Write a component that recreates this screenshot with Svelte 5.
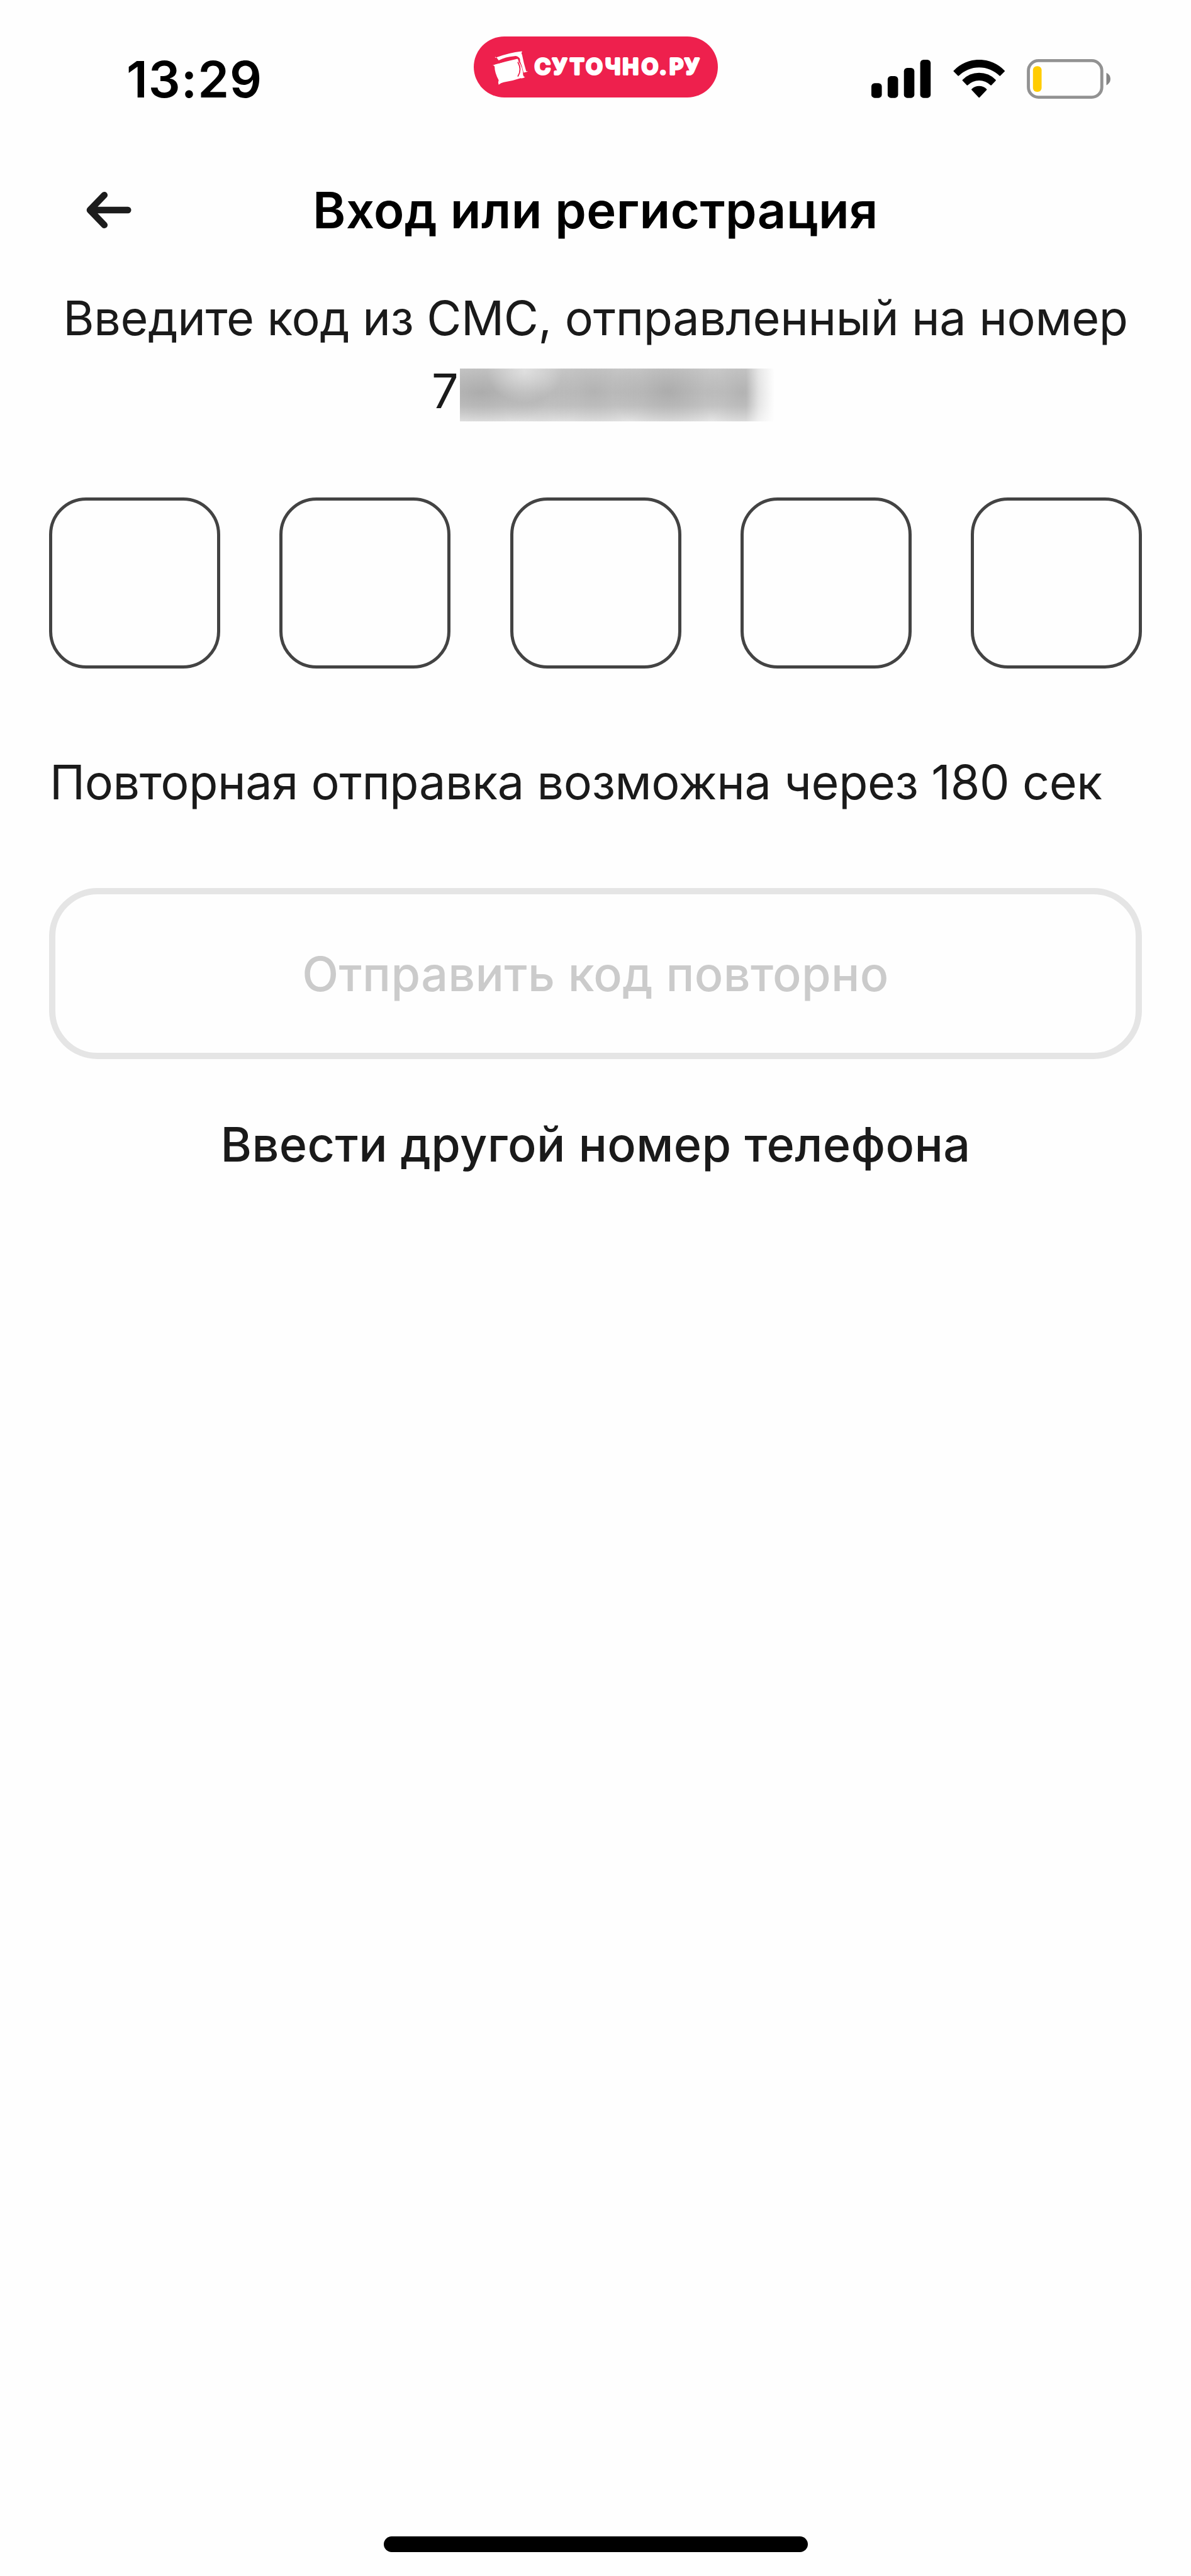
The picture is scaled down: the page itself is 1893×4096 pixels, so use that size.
<script lang="ts">
	const codeLength = 5;
	const secondsLeft = 180;

	let code: string[] = Array(codeLength).fill('');
	$: canResend = secondsLeft <= 0;
</script>

<div class="screen">
	<div class="status-bar">
		<span class="time">13:29</span>

		<svg class="brand" viewBox="0 0 480 120" role="img" aria-label="Суточно.ру">
			<rect width="480" height="120" rx="60" fill="#ee204d" />
			<g fill="#fff">
				<path d="M42 42q26-10 53-13q-2 4 0 7q3 16 8 32q2 1 4 1l-9 2q-3-14-8-25q-2-10-12-7q-15 1-29 8q-2-5-7-7z" />
				<path d="M36 56q3 1 6-1q22-6 44-11q2 2 2 5q9 13 9 27q1 3 4 4q-5 3-9 2q-17 6-33 8q-6 1-10 5q-2-4 0-9q-8-15-8-27q-1-2-5-3z" />
			</g>
			<path d="M87 51q8 14 0 27M49 52q19-7 37-10q4 0 4 5" fill="none" stroke="#ee204d" stroke-width="2.2" stroke-linecap="round" />
			<text
				class="brand-text"
				y="74.6"
				x="135.5 169 203 237 273.5 308.5 346.5 372 398.5 429"
			>СУТОЧНО.РУ</text>
		</svg>

		<div class="indicators">
			<svg class="signal" viewBox="0 0 117 75">
				<rect x="0" y="46" width="20.5" height="29" rx="6.5" />
				<rect x="32" y="32" width="20.5" height="43" rx="6.5" />
				<rect x="64" y="16" width="20.5" height="59" rx="6.5" />
				<rect x="96" y="0" width="20.5" height="75" rx="6.5" />
			</svg>
			<svg class="wifi" viewBox="0 0 102 75">
				<path d="M.8 21.5a69 69 0 0 1 100.4 0q.6.8 0 1.5l-8.6 8.6q-.8.7-1.6 0a57 57 0 0 0-80 0q-.8.7-1.6 0l-8.6-8.6q-.6-.7 0-1.5z" />
				<path d="M18.3 39.6a45 45 0 0 1 65.4 0q.6.7 0 1.4l-8.6 9q-.8.8-1.6 0a32 32 0 0 0-45 0q-.8.8-1.6 0l-8.600-9q-.6-.7 0-1.4z" />
				<path d="M36.2 57.8a20.5 20.5 0 0 1 29.6 0q.7.8 0 1.6l-14 14.7q-.8.8-1.6 0l-14-14.7q-.7-.8 0-1.6z" />
			</svg>
			<svg class="battery" viewBox="0 0 165 78">
				<rect x="3" y="3" width="144.5" height="72" rx="20" fill="none" stroke="#929292" stroke-width="6" />
				<rect x="12" y="14" width="17" height="50.5" rx="7.5" fill="#ffcc00" />
				<path d="M156.5 27q8 4 8 12t-8 12.5z" fill="#858585" />
			</svg>
		</div>
	</div>

	<header class="header">
		<button class="back" aria-label="Назад">
			<svg viewBox="0 0 90 72">
				<path d="M35.5 6.5L7 36l28.5 29.5M7 36h75" fill="none" stroke="#1c1c1c" stroke-width="13" stroke-linecap="round" stroke-linejoin="round" />
			</svg>
		</button>
		<h1>Вход или регистрация</h1>
	</header>

	<main>
		<p class="hint">Введите код из СМС, отправленный на номер</p>
		<div class="phone">
			<span>7</span>
			<span class="masked"></span>
		</div>

		<div class="code">
			{#each code as digit}
				<div class="cell">{digit}</div>
			{/each}
		</div>

		<p class="timer">Повторная отправка возможна через {secondsLeft} сек</p>

		<button class="resend" disabled={!canResend}><span>Отправить код повторно</span></button>
		<button class="change">Ввести другой номер телефона</button>
	</main>

	<div class="home-indicator"></div>
</div>

<style>
	:global(body) {
		margin: 0;
		background: #fefefe;
	}

	.screen {
		display: flex;
		flex-direction: column;
		box-sizing: border-box;
		width: 1893px;
		height: 4096px;
		overflow: hidden;
		background: #fefefe;
		color: #1a1a1a;
		font-family: Inter, "Liberation Sans", sans-serif;
	}

	button {
		padding: 0;
		border: none;
		background: none;
		color: inherit;
		font-family: inherit;
	}

	h1,
	p {
		margin: 0;
		font-weight: 400;
		white-space: nowrap;
	}

	svg {
		display: block;
	}

	.status-bar {
		display: grid;
		grid-template-columns: 753px 389px 1fr;
		height: 272px;
		padding-top: 58px;
		box-sizing: border-box;
		color: #000;
	}

	.time {
		padding: 18px 0 0 201px;
		font-size: 80px;
		line-height: 100px;
		font-weight: 600;
		letter-spacing: 1px;
	}

	.brand {
		width: 388px;
		height: 97px;
	}

	.brand-text {
		fill: #fff;
		stroke: #fff;
		stroke-width: 5;
		stroke-linejoin: round;
		text-anchor: middle;
		font-size: 42.5px;
		font-weight: 600;
	}

	.indicators {
		display: flex;
		align-items: center;
		height: 63px;
		margin: 36px 0 0 243px;
	}

	.signal {
		width: 94.6px;
		height: 60.7px;
		margin-right: 35px;
	}

	.wifi {
		width: 82.5px;
		height: 60.7px;
		margin-right: 35px;
	}

	.battery {
		width: 133.5px;
		height: 63px;
	}

	.header {
		display: grid;
		grid-template-columns: 220px 1fr 220px;
		align-items: center;
		height: 124px;
	}

	.back {
		padding-left: 137px;
	}

	.back svg {
		width: 73px;
		height: 58px;
	}

	h1 {
		color: #000;
		font-size: 79.5px;
		line-height: 100px;
		font-weight: 600;
		letter-spacing: 0.45px;
		text-align: center;
	}

	main {
		display: flex;
		flex: 1;
		flex-direction: column;
		padding: 0 78px;
	}

	.hint {
		display: flex;
		justify-content: center;
		margin-top: 52px;
		font-size: 75.5px;
		line-height: 116px;
		letter-spacing: -0.38px;
	}

	.phone {
		display: flex;
		align-items: center;
		height: 116px;
		padding-left: 608px;
		font-size: 75.5px;
		line-height: 116px;
	}

	.phone span:first-child {
		width: 45px;
	}

	/* number stays hidden behind a grey smear */
	.masked {
		width: 500px;
		height: 84px;
		margin-top: 11px;
		background:
			linear-gradient(90deg, transparent 91%, rgba(254, 254, 254, 0.6) 95%, #fefefe 100%),
			radial-gradient(ellipse 60px 50px at 103px 4px, rgba(235, 235, 235, 0.7), rgba(235, 235, 235, 0)),
			radial-gradient(ellipse 110px 60px at 34px 38px, rgba(150, 150, 150, 0.5), rgba(150, 150, 150, 0)),
			radial-gradient(ellipse 60px 60px at 128px 44px, rgba(160, 160, 160, 0.3), rgba(160, 160, 160, 0)),
			radial-gradient(ellipse 80px 70px at 213px 36px, rgba(155, 155, 155, 0.4), rgba(155, 155, 155, 0)),
			radial-gradient(ellipse 90px 70px at 331px 36px, rgba(150, 150, 150, 0.5), rgba(150, 150, 150, 0)),
			radial-gradient(ellipse 60px 70px at 449px 38px, rgba(155, 155, 155, 0.4), rgba(155, 155, 155, 0)),
			linear-gradient(#cbcbcb, #c3c3c3 45%, #c8c8c8 70%, #e5e5e5);
	}

	.code {
		display: flex;
		justify-content: space-between;
		margin-top: 111px;
	}

	.cell {
		box-sizing: border-box;
		width: 272px;
		height: 272px;
		border: 5px solid #434343;
		border-radius: 59px;
	}

	.timer {
		margin-top: 123px;
		padding-left: 1px;
		font-size: 75.5px;
		line-height: 116px;
		letter-spacing: -0.4px;
	}

	.resend {
		box-sizing: border-box;
		height: 272px;
		margin-top: 110px;
		border: 10px solid #e5e5e5;
		border-radius: 77px;
		color: #cbcbcb;
		font-size: 75.5px;
		font-weight: 500;
		letter-spacing: 0.33px;
	}

	.change {
		margin-top: 78px;
		font-size: 75.5px;
		line-height: 116px;
		font-weight: 500;
		letter-spacing: 0.4px;
	}

	.home-indicator {
		width: 674px;
		height: 25px;
		margin: 0 auto 38px;
		border-radius: 13px;
		background: #000;
	}
</style>
